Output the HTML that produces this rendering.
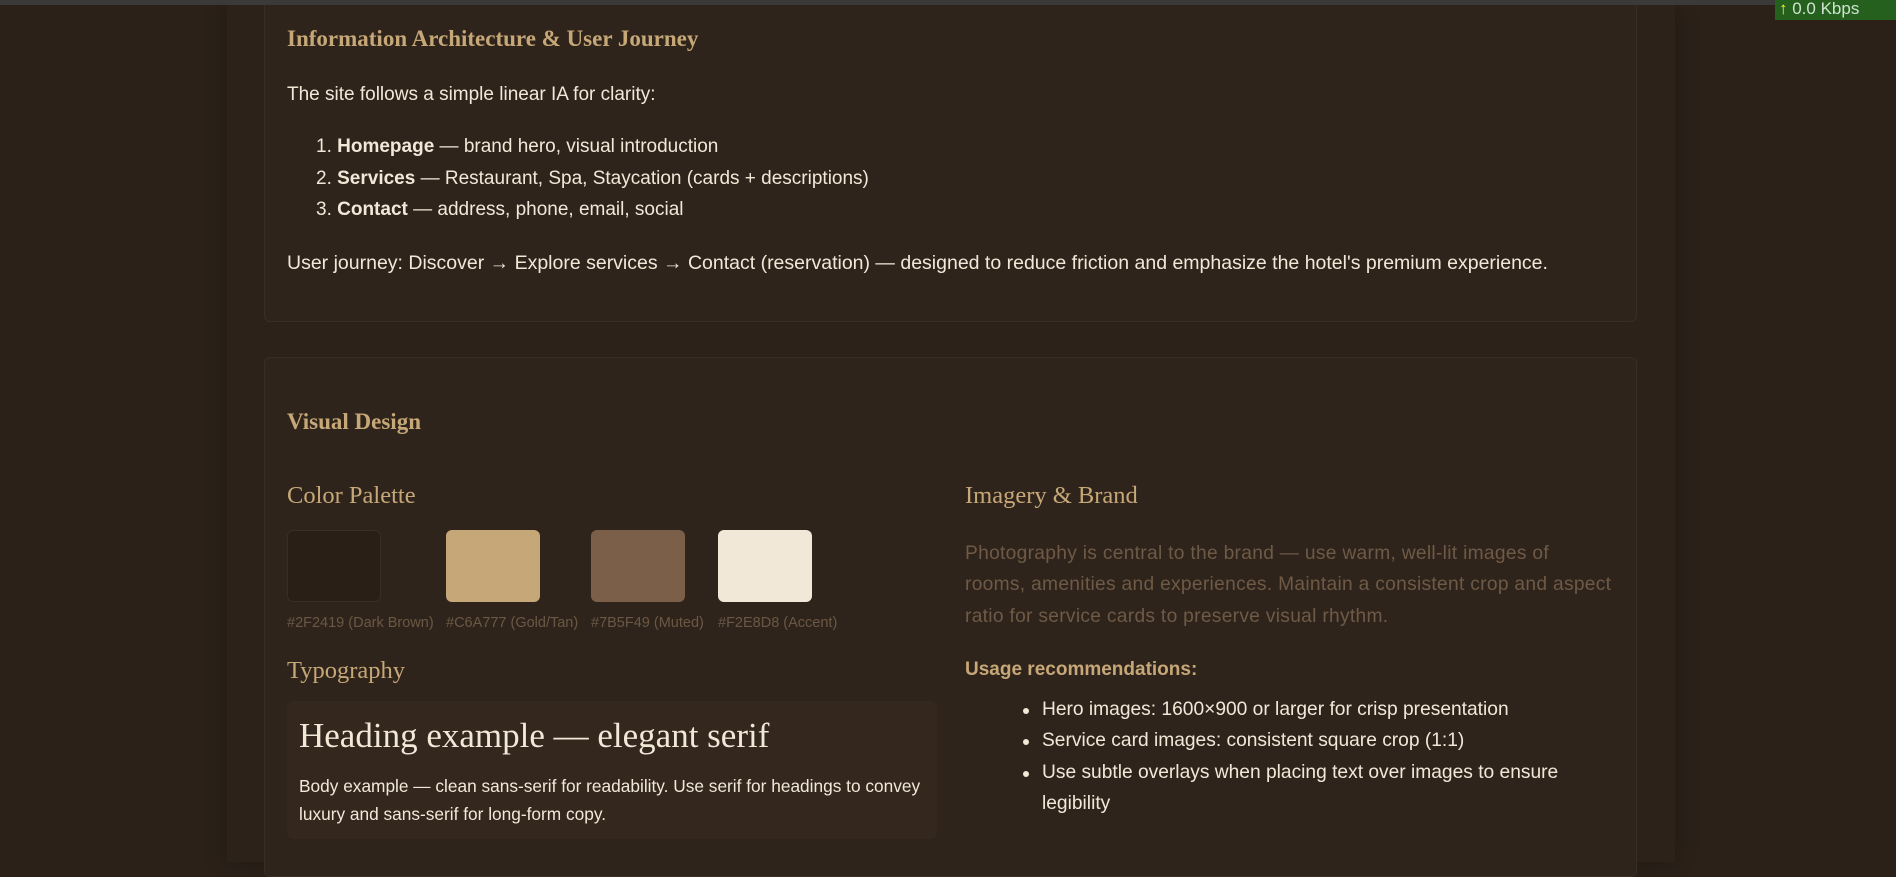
<!DOCTYPE html>
<html><head><meta charset="utf-8"><style>
*{margin:0;padding:0;box-sizing:border-box}
body{width:1896px;height:862px;overflow:hidden;background:#2b2119;font-family:"Liberation Sans",sans-serif;color:#f2e8d8;position:relative}
.bar{position:absolute;left:0;top:0;width:1896px;height:5px;background:#3c3a38;z-index:5}
.kb{position:absolute;left:1775px;top:0;width:121px;height:20px;background:#25601f;color:#cfe3cf;font-size:17px;line-height:18px;padding-left:4px;z-index:6}
.kb b{color:#f5f520;font-weight:normal}
.cont{position:absolute;left:227px;top:5px;width:1448px;height:857px;background:#2d2219;box-shadow:0 0 20px rgba(0,0,0,.25)}
.card{position:absolute;left:264px;width:1373px;background:#2f241b;border:1px solid #3a2d22;border-radius:6px}
.a{position:absolute;white-space:nowrap}
.h3{font-family:"Liberation Serif",serif;font-weight:bold;color:#c6a777;font-size:23px}
.h4{font-family:"Liberation Serif",serif;color:#c6a777;font-size:24.5px}
.t{font-size:19px}
.sw{position:absolute;top:530px;width:94px;height:72px;border-radius:6px}
.lb{font-size:14.5px;color:#6b5844;top:615px}
.m{color:#6e5a46;font-size:19.2px;letter-spacing:0.3px}
.dot{position:absolute;width:6px;height:6px;border-radius:50%;background:#f2e8d8}
.bl{font-size:19.2px}
</style></head><body>
<div class="bar"></div>
<div class="kb"><b>↑</b> 0.0 Kbps</div>
<div class="cont"></div>
<div class="card" style="top:-10px;height:332px"></div>
<div class="card" style="top:357px;height:520px"></div>

<div class="a h3" style="left:287px;top:26px">Information Architecture &amp; User Journey</div>
<div class="a t" style="left:287px;top:84px">The site follows a simple linear IA for clarity:</div>
<div class="a t" style="left:316px;top:136px">1. <b>Homepage</b> — brand hero, visual introduction</div>
<div class="a t" style="left:316px;top:168px">2. <b>Services</b> — Restaurant, Spa, Staycation (cards + descriptions)</div>
<div class="a t" style="left:316px;top:199px">3. <b>Contact</b> — address, phone, email, social</div>
<div class="a t" style="left:287px;top:252px;font-size:19.5px">User journey: Discover → Explore services → Contact (reservation) — designed to reduce friction and emphasize the hotel's premium experience.</div>

<div class="a h3" style="left:287px;top:409px">Visual Design</div>
<div class="a h4" style="left:287px;top:482px">Color Palette</div>
<div class="sw" style="left:287px;background:#2a1f17;border:1px solid #3a2d22"></div>
<div class="sw" style="left:446px;background:#c6a777"></div>
<div class="sw" style="left:591px;background:#7b5f49"></div>
<div class="sw" style="left:718px;background:#f2e8d8"></div>
<div class="a lb" style="left:287px">#2F2419 (Dark Brown)</div>
<div class="a lb" style="left:446px">#C6A777 (Gold/Tan)</div>
<div class="a lb" style="left:591px">#7B5F49 (Muted)</div>
<div class="a lb" style="left:718px">#F2E8D8 (Accent)</div>
<div class="a h4" style="left:287px;top:657px">Typography</div>
<div style="position:absolute;left:287px;top:701px;width:650px;height:138px;background:#33271e;border-radius:6px"></div>
<div class="a" style="left:299px;top:716px;font-family:'Liberation Serif',serif;font-size:35px">Heading example — elegant serif</div>
<div class="a" style="left:299px;top:776px;font-size:17.3px">Body example — clean sans-serif for readability. Use serif for headings to convey</div>
<div class="a" style="left:299px;top:804px;font-size:17.3px">luxury and sans-serif for long-form copy.</div>

<div class="a h4" style="left:965px;top:482px">Imagery &amp; Brand</div>
<div class="a m" style="left:965px;top:543px">Photography is central to the brand — use warm, well-lit images of</div>
<div class="a m" style="left:965px;top:574px">rooms, amenities and experiences. Maintain a consistent crop and aspect</div>
<div class="a m" style="left:965px;top:606px">ratio for service cards to preserve visual rhythm.</div>
<div class="a t" style="left:965px;top:659px;color:#c6a777;font-weight:bold">Usage recommendations:</div>
<div class="dot" style="left:1023px;top:708px"></div>
<div class="a bl" style="left:1042px;top:699px">Hero images: 1600×900 or larger for crisp presentation</div>
<div class="dot" style="left:1023px;top:739px"></div>
<div class="a bl" style="left:1042px;top:730px">Service card images: consistent square crop (1:1)</div>
<div class="dot" style="left:1023px;top:771px"></div>
<div class="a bl" style="left:1042px;top:762px">Use subtle overlays when placing text over images to ensure</div>
<div class="a bl" style="left:1042px;top:793px">legibility</div>
</body></html>
